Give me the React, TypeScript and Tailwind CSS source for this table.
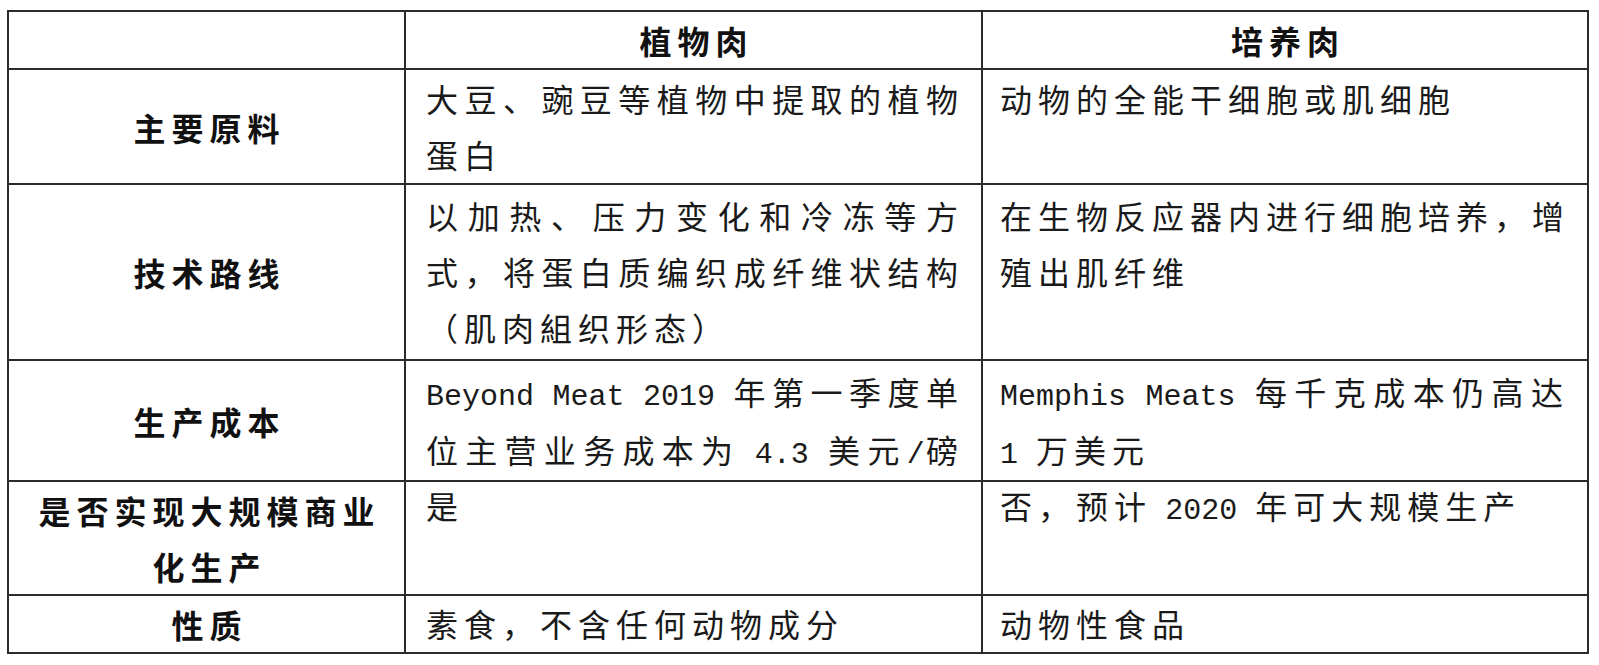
import React from "react";

const FONT = { fontFamily: '"Noto Sans CJK SC", "Noto Sans", sans-serif' };

function Lat({ children }: { children: React.ReactNode }) {
  return (
    <span className="text-[30px] tracking-normal" style={{ fontFamily: '"Liberation Mono", monospace' }}>
      {children}
    </span>
  );
}

function Line({ children, justify }: { children: React.ReactNode; justify?: boolean }) {
  return (
    <div className={justify ? "text-justify [text-align-last:justify] whitespace-nowrap" : "whitespace-nowrap"}>
      {children}
    </div>
  );
}

function Label({ children }: { children: React.ReactNode }) {
  return (
    <div className="bg-white flex flex-col items-center justify-center text-center font-bold text-[32px] leading-[56px] tracking-[6px] pl-[6px] text-[#111]">
      {children}
    </div>
  );
}

function Body({ children, cls }: { children: React.ReactNode; cls?: string }) {
  return (
    <div className={"bg-white text-[32px] tracking-[6px] text-[#1a1a1a] " + (cls ?? "leading-[56px]")}>
      {children}
    </div>
  );
}

export default function App() {
  return (
    <div className="w-[1599px] h-[665px] bg-white pt-[10px] pl-[7px]" style={FONT}>
      <div className="inline-grid grid-cols-[395px_575px_604px] grid-rows-[56px_113px_174px_119px_112px_56px] gap-[2px] p-[2px] bg-[#2b2b2b]">
        {/* header */}
        <div className="bg-white" />
        <Label>植物肉</Label>
        <Label>培养肉</Label>

        {/* row 1 */}
        <Label>主要原料</Label>
        <Body cls="pl-[20px] pr-[17px] leading-[56px]">
          <Line justify>大豆、豌豆等植物中提取的植物</Line>
          <Line>蛋白</Line>
        </Body>
        <Body cls="pl-[17px] pr-[18px] leading-[56px]">
          <Line>动物的全能干细胞或肌细胞</Line>
        </Body>

        {/* row 2 */}
        <Label>技术路线</Label>
        <Body cls="pl-[20px] pr-[17px] pt-[2px] leading-[56px]">
          <Line justify>以加热、压力变化和冷冻等方</Line>
          <Line justify>式，将蛋白质编织成纤维状结构</Line>
          <Line>（肌肉組织形态）</Line>
        </Body>
        <Body cls="pl-[17px] pr-[18px] pt-[2px] leading-[56px]">
          <Line justify>在生物反应器内进行细胞培养，增</Line>
          <Line>殖出肌纤维</Line>
        </Body>

        {/* row 3 */}
        <Label>生产成本</Label>
        <Body cls="pl-[20px] pr-[17px] pt-[4px] leading-[52px]">
          <Line justify>
            <Lat>Beyond Meat 2019 </Lat>年第一季度单
          </Line>
          <Line justify>
            位主营业务成本为 <Lat>4.3 </Lat>美元<Lat>/</Lat>磅
          </Line>
        </Body>
        <Body cls="pl-[17px] pr-[18px] pt-[4px] leading-[52px]">
          <Line justify>
            <Lat>Memphis Meats </Lat>每千克成本仍高达
          </Line>
          <Line>
            <Lat>1 </Lat>万美元
          </Line>
        </Body>

        {/* row 4 */}
        <Label>
          <span>是否实现大规模商业</span>
          <span>化生产</span>
        </Label>
        <Body cls="pl-[20px] pr-[17px] leading-[46px]">
          <Line>是</Line>
        </Body>
        <Body cls="pl-[17px] pr-[18px] leading-[46px]">
          <Line>
            否，预计 <Lat>2020 </Lat>年可大规模生产
          </Line>
        </Body>

        {/* row 5 */}
        <Label>性质</Label>
        <Body cls="pl-[20px] pr-[17px] leading-[54px]">
          <Line>素食，不含任何动物成分</Line>
        </Body>
        <Body cls="pl-[17px] pr-[18px] leading-[54px]">
          <Line>动物性食品</Line>
        </Body>
      </div>
    </div>
  );
}
